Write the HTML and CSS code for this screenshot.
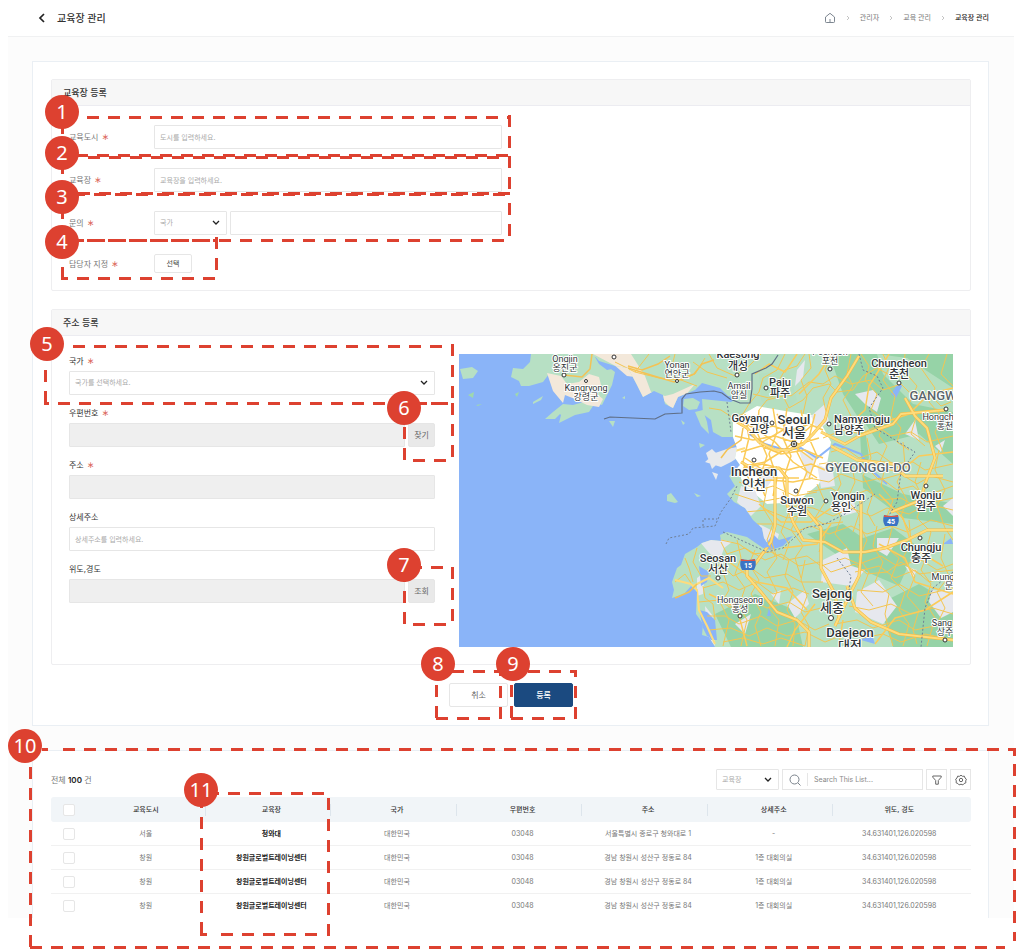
FILE: index.html
```html
<!DOCTYPE html>
<html lang="ko">
<head>
<meta charset="utf-8">
<title>교육장 관리</title>
<meta name="viewport" content="width=device-width, initial-scale=1">
<link rel="stylesheet" href="styles.css">
</head>
<body>
<div class="page">
  <header class="topbar">
    <button class="back" type="button" aria-label="뒤로">
      <svg width="8" height="10" viewBox="0 0 8 10"><path d="M6 1L2 5l4 4" fill="none" stroke="#222" stroke-width="1.700"/></svg>
    </button>
    <h1 class="title">교육장 관리</h1>
    <nav class="crumbs" aria-label="위치">
      <a href="#" aria-label="홈"><svg class="home" width="12" height="12" viewBox="0 0 12 12" fill="none" stroke="#7d8690" stroke-width="1"><path d="M1.500 5L6 1.300 10.500 5v4.700a.8.8 0 0 1-.8.8H2.300a.8.8 0 0 1-.8-.8z"/><path d="M6 10.500V7"/></svg></a>
      <svg class="sep" width="4" height="6" viewBox="0 0 4 6"><path d="M1 1l2 2-2 2" fill="none" stroke="#b5b5b5" stroke-width=".8"/></svg>
      <a href="#">관리자</a>
      <svg class="sep" width="4" height="6" viewBox="0 0 4 6"><path d="M1 1l2 2-2 2" fill="none" stroke="#b5b5b5" stroke-width=".8"/></svg>
      <a href="#">교육 관리</a>
      <svg class="sep" width="4" height="6" viewBox="0 0 4 6"><path d="M1 1l2 2-2 2" fill="none" stroke="#b5b5b5" stroke-width=".8"/></svg>
      <a href="#" class="current" aria-current="page">교육장 관리</a>
    </nav>
  </header>

  <main class="content">
    <form class="card">
      <section class="panel">
        <h2 class="panel-title">교육장 등록</h2>
        <div class="rows">
          <div class="row">
            <label for="city">교육도시 <span class="req">∗</span></label>
            <input class="field" id="city" type="text" placeholder="도시를 입력하세요.">
          </div>
          <div class="row">
            <label for="center">교육장 <span class="req">∗</span></label>
            <input class="field" id="center" type="text" placeholder="교육장을 입력하세요.">
          </div>
          <div class="row">
            <label for="dial">문의 <span class="req">∗</span></label>
            <div class="phone">
              <div class="select">
                <select class="field" id="dial"><option>국가</option></select>
                <svg class="arrow" width="8" height="6" viewBox="0 0 8 6"><path d="M1 1l3 3 3-3" fill="none" stroke="#222" stroke-width="1.300"/></svg>
              </div>
              <input class="field" type="tel" aria-label="문의 전화번호">
            </div>
          </div>
          <div class="row">
            <label for="manager">담당자 지정 <span class="req">∗</span></label>
            <button class="btn small" id="manager" type="button">선택</button>
          </div>
        </div>
      </section>

      <section class="panel">
        <h2 class="panel-title">주소 등록</h2>
        <div class="address">
          <div class="stack">
            <div class="item">
              <label for="country">국가 <span class="req">∗</span></label>
              <div class="select">
                <select class="field" id="country"><option>국가를 선택하세요.</option></select>
                <svg class="arrow" width="8" height="6" viewBox="0 0 8 6"><path d="M1 1l3 3 3-3" fill="none" stroke="#222" stroke-width="1.300"/></svg>
              </div>
            </div>
            <div class="item">
              <label for="zip">우편번호 <span class="req">∗</span></label>
              <div class="with-btn"><input class="field" id="zip" type="text" disabled><button class="btn gray" type="button">찾기</button></div>
            </div>
            <div class="item">
              <label for="addr">주소 <span class="req">∗</span></label>
              <input class="field" id="addr" type="text" disabled>
            </div>
            <div class="item">
              <label for="addr2">상세주소</label>
              <input class="field" id="addr2" type="text" placeholder="상세주소를 입력하세요.">
            </div>
            <div class="item">
              <label for="geo">위도,경도</label>
              <div class="with-btn"><input class="field" id="geo" type="text" disabled><button class="btn gray" type="button">조회</button></div>
            </div>
          </div>

          <svg class="map" viewBox="0 0 494 293" role="img" aria-label="지도">
            <defs>
              <clipPath id="land">
                <path d="M134 0L140 7 156 12 169 14 178 31 184 43 195 37 204 41 206 50 214 54 219 43 236 36 243 29 261 34 269 42 280 43 272 48 243 45 244 60 252 66 254 78 263 83 274 83 278 94 276 104 281 111 270 122 276 132 268 140 275 148 286 154 294 166 303 174 305 184 311 193 304 194 288 183 268 178 261 181 262 187 252 186 243 189 238 193 226 200 222 211 218 214 213 228 215 236 213 244 225 240 232 232 238 238 237 260 244 270 243 281 250 283 256 293H494V0z"/>
              </clipPath>
            </defs>
            <rect width="494" height="293" fill="#8ab4f8"/>
            <!-- islands and northern peninsulas -->
            <g fill="#b7e0c4">
              <path d="M72 0L71 8 64 15 54 14 52 23 60 27 62 32 70 32 84 28 90 20 100 30 104 41 112 36 120 44 143 51 153 31 156 18 148 12 136 0z"/>
              <path d="M1 15l12-2 6 4-5 7-10 1zM99 58l5-8 10 1 14-4 8 2-6 9-14 3-16 8 2-8zM86 65l8-7 10-8 4 3-8 8-4 4zM74 48l10-6-2 4-8 4z"/>
              <path d="M150 67h6l-2 6zM163 44l3-2v3zM240 89l6 2-5 3zM222 66l4 3-2 2z"/>
              <path d="M208 141l4-2 7 9-3 1-8-2zM235 139l7 3-4 1zM227 154l6 4zM206 169l3 2zM194 180l3 3zM225 45l9-1 7 4-3 7-8 1-6-4z"/>
              <path d="M236 58l8-2 4 12 2 12-8-8z"/>
              <path d="M56 40l4-2-2 5zM9 41l6-3-1 6zM17 51l6-1-4 2z" fill="#9fd8ad"/>
            </g>
            <path d="M88 19l14 3 6 8 12-2 10-8 10 3 2 8-8 6 10 8-4 8-12-2-12-6-10-4-2 8-10-12zM134 0l12 0 22 10 16 14-16-2-14-12-16-6z" fill="#f3e8da"/>
            <path d="M136 3l8 2 10 8 4 1-10 2-8-6z" fill="#8ab4f8"/>
            <path d="M246 108l10-9 12-4 10-2 2 10-8 5-10 5z M247 99l6-4 10 10-10 10zM253 118l6 2-2 6z" fill="#e8eaed"/>
            <g clip-path="url(#land)">
              <rect width="494" height="293" fill="#b7e0c4"/>
              <path d="M134 0H172L186 22 192 38 206 42 214 40 236 30 214 56 204 46 184 44 168 18z" fill="#f3e8da"/>
              <path d="M330 0h40l14 40 22 34 4 30-8 16 42 20 52 10V0zM348 180l36-10 20 14 30-10 24 18-18 40-46-20zM420 250l40-20 34 20v43h-60zM256 260l40-20 40 16 8 37h-72zM400 60l20 30 40-10 34 30v60l-50-6-40-30z" fill="#96d3a7"/>
              <path d="M300 20l30-4 8 30-20 20-16-20zM418 0l30 4 46 30v24l-40-8-30-30z" fill="#b4dfc0"/>
              <path d="M274 66l24-14 34 6 26 4 14 26-4 22-8 20-22 18-30 2-24-20-10-30z" fill="#fff"/>
              <g fill="#e6e8ee">
                <path d="M338 16l8-10-2 18-8 8zM396 40l18-4 8 8-4 14-12-8zM352 62l14-12 4 18-12 8zM446 80l10-14 4 20zM476 92l10-6-4 12zM358 110l16 8 2 14-14 2zM282 132l14 4 6 16-10 10-14-14zM300 170l20 10-4 14-12-8zM374 150l20-6 4 14-14 4z"/>
                <path d="M364 206l24-12 4 18 14 4-14 16-30-4zM418 184l22 0-12 18-10-6zM398 238l22-12 18 26-14 18-28-12zM472 236l22 2v20l-12 6-12-16zM328 250l18-14 4 14-14 14zM312 240l10-4-2 14zM446 212l12 4-4 8zM484 152l10-8v18z"/>
                <path d="M241 188l14-4 18 4-8 6-4 12-10-6zM238 224l8-6-2 22-6 2zM246 252l8 10 2 30-8-10zM276 270l16-10-6 20zM296 112l20 10-10 14zM340 96l18 8-10 20z"/>
              </g>
              <path d="M304 194l10-14 6 6 14-4-10 10-12 4zM240 256l8 2 8 8 2 20-8 0-6-12zM240 212l10 6-2 10-6 4zM308 262l2-8 2 8zM432 40l8-12 3 4-6 12zM484 190l8-6 2 6zM402 286l10-8 4 12z" fill="#8ab4f8"/>
              <path d="M290 80l16 10 20 6 16-2 16 10 18-14 26 10 8 14 18 16" fill="none" stroke="#8ab4f8" stroke-width="2"/>
              <g class="lanes">
                <path d="M156 8l20 10 24 6 22 2 14-6 10-16M176 18l14-18M210 24l6-24M222 26l16 6M234 8l14 10 20 6"/>
                <path d="M250 0l8 14 18 8 14-10 12-12M250 54l12 2 12 8 10-4 6-10 10-12 4-14 14-8 8-16"/>
                <path d="M294 40l16 4 12-6 10 4 18-14 14 2 12-8 16 8 20-4 12 10 18-6 10 10 18 0 12 12 10-4"/>
                <path d="M300 56l8-10 16-4 6 12 14-8 10-12 16-4 8 8 16-2 10-14 14-8 18 10 10-4"/>
                <path d="M318 30l8-14 12-4 8-12M350 0l2 14-10 12 6 16-4 18M372 0l-6 16 6 14-8 14 4 18-10 12M392 0l-4 20 6 12-10 14 8 16-16 8"/>
                <path d="M402 0l8 12-4 14 12 14-6 16 14 10-6 16 8 10-8 18M424 0l6 14-6 12 12 16-4 20 10 12-4 14 12 8M446 0l-2 16 14 16-8 18 8 10-6 20 14 12M470 0l-8 14 14 20-6 14 14 16-8 14 8 20M488 0l-6 20 12 12"/>
                <path d="M364 84l20-8 18 4 16-8 14 10 20-4 16 10 26-6M372 98l14-4 14 10 18-6 16 12 20-2 12 8 28-6M360 110l16-2 14 10 18-4 12 12 22-6 16 10 14-8 22 6"/>
                <path d="M350 124l20 4 12-8 22 8 18-4 16 12 16-4 12 10 28-10M348 138l24-4 16 10 20-8 14 10 20-2 14 8 38-8M334 152l20 2 20 8 18-8 20 8 16-8 22 6 18-10 26 6"/>
                <path d="M280 128l20 8 14-4 22 10 22-4M276 140l24 8 22-4 20 8M286 158l22-2 20 8 22-4 14 10 20-2M294 170l24 0 18 8 16-6 18 8 22-8 16 8 24-8 16 6 24-12 22 6"/>
                <path d="M308 134l-4 20 10 16-6 16 8 16M324 138l6 20-8 20 8 12-6 16M340 160l-8 16 12 16-8 12 6 20M358 130l8 18-10 16 10 18-6 16M376 110l6 20-8 16 8 18-6 16 14 16M392 108l4 20-8 18 12 14-6 18M408 84l4 20-8 18 10 18-6 18 8 14M426 112l-4 20 12 14-8 22M444 88l2 24-8 16 10 18-6 16 8 14M462 108l-6 20 8 16-6 20 14 14-4 16M480 96l-4 20 10 20-8 16 8 22 8 12"/>
                <path d="M262 186l18 4 14 10 18-2 16 8 20-4 14 10 24-8 14 6 22-8 16 10 24-6 16 10 16-6"/>
                <path d="M268 200l18-6 20 12 16-6 18 12 20-4 12 10 24-8 12 10 20-2 14-10 18 12 34-4"/>
                <path d="M248 216l14-6 12 12 18-8 14 10 22-4 14 8 22 0M244 234l20-6 16 8 18-8 16 12 20-6 16 6"/>
                <path d="M240 248l20-2 12 8 20-8 16 8 22-6 16 10 16-4M248 262l18 0 14 8 22-8 16 10 20-6 18 10 14-6"/>
                <path d="M250 276l22-2 18 8 18-8 20 8 18-4 20 10 20-8M264 288l20-4 20 6 18-6 24 8"/>
                <path d="M216 228l10-8 8 12M226 204l4 10 4 14M238 194l-4 14 8 14 10 0M244 232l2 12 8 6 2 16M262 188l8 16-6 14 6 18-8 14 8 16-6 26"/>
                <path d="M278 186l4 18-6 16 10 14-6 18 8 14-6 26M296 196l-6 14 10 16-8 14 10 18-6 14 6 20M312 186l6 18-10 14 10 20-8 16 10 12-4 26M330 206l-4 16 8 16-6 18 8 14-2 22M346 206l-4 20 6 16-6 16 8 14-4 20"/>
                <path d="M400 170l8 16-8 18 10 14-8 20 12 14M418 172l-4 20 10 16-8 20 14 12-4 20 8 32M434 170l-6 24 12 10-8 20 14 14-6 18 10 14-6 22M450 166l2 22-8 16 12 18-8 20 12 14-6 20 4 14M470 196l-8 20 10 14-6 18 10 16-8 28M486 180l-4 24 8 18-12 16 8 16-6 12"/>
                <path d="M396 218l24-6 16 12 20-8 14 12 24-8M398 236l26 2 16-8 20 12 34-8M390 252l20 4 22-6 20 10 22-6 20 6M376 270l22-4 16 8 26-8 16 10 38-8M404 284l20-4 18 8 24-8 28 6"/>
              </g>
              <g class="streets">
                <path d="M280 66l18 10 16-4 18 6 18-8 14 6M276 82l18 4 22-4 24 8 20-6M282 98l20-6 20 8 24-4 18 8M284 114l20-4 24 6 24-6 14 6M290 128l22-2 22 2 20-4M286 60l4 24-6 24 8 24M300 56l-2 22 10 24-8 24 6 16M314 54l4 24-8 22 8 24-4 18M328 54l-4 30 8 18-8 24 4 20M342 56l4 22-8 20 10 20-10 24M356 60l-6 24 8 18-8 22"/>
                <path d="M292 72l24 16 18 20 24 16M352 72l-24 22-22 14-20 4M300 90l24-14 22-2M286 104l30 20 24 0M318 60l20 34 16 12"/>
                <path d="M340 40l20-20 12-20M384 76l22-20 4-24 20-32M420 70l30-10 20-20 24-6M410 110l30 8 20-16 34-4M300 150l22 18 30 0 26-18M420 190l26 14 10 24 38 12M270 208l28 20 30 6 20 22M416 290l20-26 30-8 28-18M356 250l-20 26-8 17M250 240l28 14 10 38M296 20l14-10 16 8 12-18M420 140l24 24 10 30 30 18M372 170l-14 20-34 4M380 290l4-24"/>
              </g>
              <g class="highway-edge">
                <path d="M282 108l14 8 24-2 8 10 0 26 6 18 10 18 22 2 18 10 22 0 20-4 22-8 20-10 46 0"/>
                <path d="M278 68l10 6 12 14 16 8 14 0 14-6 10-10 12-14 6-22 16-22 12-20"/>
                <path d="M316 112l0 26 0 34-4 16-16 22-8 2 0 10 14 16 16 20 20 8 12 12 0 26"/>
                <path d="M372 92l26 14 36 4 12 12 38 0M362 78l24 12 14-8 34-12 8-10 44-4M446 44l10 18 12 12 8 30-10 26-4 16-30 12"/>
                <path d="M402 140l0 60-2 22-10 20-14 30M388 232l8 22 16 14 28 12 54 6M342 150l20 24 0 40 14 26 4 24"/>
              </g>
              <g class="highway">
                <path d="M282 108l14 8 24-2 8 10 0 26 6 18 10 18 22 2 18 10 22 0 20-4 22-8 20-10 46 0"/>
                <path d="M278 68l10 6 12 14 16 8 14 0 14-6 10-10 12-14 6-22 16-22 12-20"/>
                <path d="M316 112l0 26 0 34-4 16-16 22-8 2 0 10 14 16 16 20 20 8 12 12 0 26"/>
                <path d="M372 92l26 14 36 4 12 12 38 0M362 78l24 12 14-8 34-12 8-10 44-4M446 44l10 18 12 12 8 30-10 26-4 16-30 12"/>
                <path d="M402 140l0 60-2 22-10 20-14 30M388 232l8 22 16 14 28 12 54 6M342 150l20 24 0 40 14 26 4 24"/>
                <path d="M216 226l16 4 6 6 2 20 8 16 8 18M234 232l16-8 14 10M246 108l20-8 20-6"/>
              </g>
            </g>
            <g fill="none" stroke="#f4c254" stroke-width="1.500">
              <path d="M216 244l14-6 8-8M105 21l18 2 8-8 2-15M169 12l14 4 16-6 12-8M169 14l26 8 20 6 20-8 8-10 12-4"/>
              <path d="M262 104l6-8 14-10 2-12"/>
            </g>
            <path d="M145 65l6-2 45 2 10-5 17-1 0-14 4-5 14-2 14-1 8 2 8 6 10 4 10 0 2-14 0-15 14-6 6-4 6-9" fill="none" stroke="#5f6e86" stroke-width="1.200"/>
            <g fill="none" stroke="#6f7f96" stroke-width="1" stroke-dasharray="2 2">
              <path d="M207 190l3-6 20-4 4-6 22-2 6-14 10-14 6-12M244 172v-7h14M268 48l4 30M264 178l44 20 16-4 22-20 20-4 20-10 30-20M400 0l4 16 14 6 6 12-14 20 6 20 40 24-14 20-4 30-12 20M378 204l14 18-2 14M494 218l-20 16-8 20-4 39"/>
            </g>
            <g class="pins">
              <circle cx="105" cy="21" r="2"/><circle cx="127" cy="27" r="1.500"/><circle cx="155" cy="3" r="2"/><circle cx="218" cy="27" r="1.500"/><circle cx="278" cy="21" r="2"/><circle cx="307" cy="34" r="2"/><circle cx="371" cy="15" r="2"/><circle cx="440" cy="29" r="2"/><circle cx="313" cy="69" r="2"/><circle cx="370" cy="70" r="2"/><circle cx="487" cy="55" r="2"/><circle cx="295" cy="106" r="2"/><circle cx="337" cy="137" r="2"/><circle cx="367" cy="147" r="2"/><circle cx="467" cy="132" r="2"/><circle cx="461" cy="184" r="2"/><circle cx="259" cy="224" r="2"/><circle cx="281" cy="262" r="2"/><circle cx="372" cy="264" r="2.500"/><circle cx="486" cy="286" r="2"/>
              <circle cx="335" cy="90" r="2.800"/><circle cx="335" cy="90" r="1"/>
            </g>
            <g class="town">
              <text x="106" y="8">Ongjin</text><text x="106" y="17">옹진군</text>
              <text x="127" y="37">Kangryong</text><text x="127" y="46">강령군</text>
              <text x="218" y="14">Yonan</text><text x="218" y="23">연안군</text>
              <text x="280" y="35">Amsil</text><text x="280" y="44">암실</text>
              <text x="371" y="1">Pocheon</text><text x="371" y="10">포천</text>
              <text x="281" y="249">Hongseong</text><text x="281" y="258">홍성</text>
              <text x="479" y="66">Hongch</text><text x="486" y="75">홍천</text>
              <text x="484" y="226">Mung</text><text x="490" y="235">문</text>
              <text x="483" y="272">Sang</text><text x="486" y="281">상주</text>
            </g>
            <g class="city">
              <text x="279" y="4">Kaesong</text><text x="279" y="16">개성</text>
              <text x="321" y="32">Paju</text><text x="321" y="43">파주</text>
              <text x="440" y="13">Chuncheon</text><text x="440" y="24">춘천</text>
              <text x="291" y="68">Goyang</text><text x="300" y="79">고양</text>
              <text x="403" y="69">Namyangju</text><text x="390" y="80">남양주</text>
              <text x="338" y="150">Suwon</text><text x="338" y="161">수원</text>
              <text x="389" y="146">Yongin</text><text x="382" y="157">용인</text>
              <text x="467" y="145">Wonju</text><text x="467" y="156">원주</text>
              <text x="462" y="197">Chungju</text><text x="462" y="208">충주</text>
              <text x="259" y="208">Seosan</text><text x="259" y="219">서산</text>
            </g>
            <g class="metro">
              <text x="335" y="70">Seoul</text><text x="335" y="83">서울</text>
              <text x="295" y="122">Incheon</text><text x="295" y="135">인천</text>
              <text x="373" y="244">Sejong</text><text x="373" y="258">세종</text>
              <text x="391" y="283">Daejeon</text><text x="391" y="296">대전</text>
            </g>
            <g class="region"><text x="409" y="118">GYEONGGI-DO</text><text x="474" y="46">GANGW</text></g>
            <g class="shield">
              <path d="M425 161q7 2 14 0 2 6-1 11h-12q-3-5-1-11z"/><path class="cap" d="M425 161q7 2 14 0v2h-14z"/><text x="432" y="170">45</text>
              <path d="M282 205q7 2 14 0 2 6-1 11h-12q-3-5-1-11z"/><path class="cap" d="M282 205q7 2 14 0v2h-14z"/><text x="289" y="214">15</text>
            </g>
          </svg>
        </div>
      </section>

      <div class="actions">
        <button class="btn" type="button">취소</button>
        <button class="btn primary" type="submit">등록</button>
      </div>
    </form>

    <section class="card list">
      <div class="toolbar">
        <p class="count">전체 <b>100</b> 건</p>
        <div class="tools">
          <div class="select">
            <select class="field" aria-label="검색 항목"><option>교육장</option></select>
            <svg class="arrow" width="8" height="6" viewBox="0 0 8 6"><path d="M1 1l3 3 3-3" fill="none" stroke="#222" stroke-width="1.300"/></svg>
          </div>
          <div class="search">
            <svg width="12" height="12" viewBox="0 0 12 12" fill="none" stroke="#7b838c" stroke-width="1"><circle cx="5.500" cy="5.500" r="4.500"/><path d="M9 9l2.500 2.500"/></svg>
            <input type="text" aria-label="목록 검색" placeholder="Search This List...">
          </div>
          <button class="icon-btn" type="button" aria-label="필터"><svg width="10" height="10" viewBox="0 0 10 10" fill="none" stroke="#666" stroke-width="1" stroke-linejoin="round"><path d="M.8 1h8.400v1.200L6.300 5.500v3.700H3.700V5.500L.8 2.200z"/></svg></button>
          <button class="icon-btn" type="button" aria-label="설정"><svg width="12" height="12" viewBox="0 0 12 12" fill="none" stroke="#666" stroke-width="1" stroke-linejoin="round"><path d="M6 .8l1.500 1.100 1.900-.1.600 1.800 1.400 1.200-.7 1.700.2 1.900-1.800.7-1.200 1.400L6 9.800l-1.900.7-1.200-1.400-1.800-.7.2-1.900L.6 4.800 2 3.600l.6-1.800 1.900.1z" transform="translate(0 .4)"/><circle cx="6" cy="6" r="1.700"/></svg></button>
        </div>
      </div>
      <table class="grid">
        <colgroup><col class="c-check"><col class="c-city"><col class="c-mid"><col class="c-mid"><col class="c-mid"><col class="c-mid"><col class="c-mid"><col></colgroup>
        <thead>
          <tr><th><input type="checkbox" aria-label="전체 선택"></th><th class="line">교육도시</th><th class="line">교육장</th><th class="line">국가</th><th class="line">우편번호</th><th class="line">주소</th><th class="line">상세주소</th><th>위도, 경도</th></tr>
        </thead>
        <tbody>
          <tr><td><input type="checkbox" aria-label="선택"></td><td>서울</td><td class="name">청와대</td><td>대한민국</td><td>03048</td><td>서울특별시 종로구 청와대로 1</td><td>-</td><td>34.631401,126.020598</td></tr>
          <tr><td><input type="checkbox" aria-label="선택"></td><td>창원</td><td class="name">창원글로벌트레이닝센터</td><td>대한민국</td><td>03048</td><td>경남 창원시 성산구 정동로 84</td><td>1층 대회의실</td><td>34.631401,126.020598</td></tr>
          <tr><td><input type="checkbox" aria-label="선택"></td><td>창원</td><td class="name">창원글로벌트레이닝센터</td><td>대한민국</td><td>03048</td><td>경남 창원시 성산구 정동로 84</td><td>1층 대회의실</td><td>34.631401,126.020598</td></tr>
          <tr><td><input type="checkbox" aria-label="선택"></td><td>창원</td><td class="name">창원글로벌트레이닝센터</td><td>대한민국</td><td>03048</td><td>경남 창원시 성산구 정동로 84</td><td>1층 대회의실</td><td>34.631401,126.020598</td></tr>
        </tbody>
      </table>
    </section>
  </main>
</div>

<svg class="notes" width="1016" height="949" viewBox="0 0 1016 949">
  <g class="dashes">
    <!-- 1 -->
    <path d="M87 117.500H511M76 155.500H508M509.500 115V128M509.500 136V149M62.500 122V134"/>
    <!-- 2 -->
    <path d="M88 157.500H500M78 193.500H511M509.500 156V190M62.500 162V174"/>
    <!-- 3 -->
    <path d="M73 194.500H506M72 240.500H505M509.500 203V237M62.500 207V219"/>
    <!-- 4 -->
    <path d="M87 240.500H216M216.500 237V249M216.500 258V270M77 278.500H216M61 278.500H68M62.500 267V279"/>
    <!-- 5 -->
    <path d="M73 346.500H454M452.500 344V356M452.500 365V399M58 403.500H449M45.500 370V404M44 403.500H49"/>
    <!-- 6 -->
    <path d="M410 403.500H446M452.500 403V458M413 460.500H448M404.500 427V461"/>
    <!-- 7 -->
    <path d="M410 567.500H446M452.500 567V622M413 624.500H448M404.500 591V625M404.500 570V582"/>
    <!-- 8 -->
    <path d="M452 671.500H502M500.500 665V676M500.500 686V720M436 718.500H491M436.500 685V719"/>
    <!-- 9 -->
    <path d="M528 671.500H577M575.500 670V677M575.500 686V720M511 718.500H566M511.500 685V719"/>
    <!-- 10 -->
    <path d="M42 749.500H48M63 749.500H1016M1014.500 748V756M1014.500 764V941M30 947.500H1005M30.500 767V949"/>
    <!-- 11 -->
    <path d="M207 793.500H325M328.500 798V936M221 934.500H319M200 934.500H207M201.500 796V936"/>
  </g>
  <g class="dots">
    <circle cx="62" cy="112" r="17"/><circle cx="62" cy="153" r="17"/><circle cx="62" cy="197" r="17"/><circle cx="62" cy="242" r="17"/><circle cx="47" cy="344" r="17"/><circle cx="404" cy="408" r="17"/><circle cx="404" cy="565" r="17"/><circle cx="438" cy="664" r="17"/><circle cx="513" cy="664" r="17"/><circle cx="25" cy="746" r="17"/><circle cx="201" cy="790" r="17"/>
  </g>
  <g class="nums">
    <text x="62" y="119">1</text><text x="62" y="160">2</text><text x="62" y="204">3</text><text x="62" y="249">4</text><text x="47" y="351">5</text><text x="404" y="415">6</text><text x="404" y="572">7</text><text x="438" y="671">8</text><text x="513" y="671">9</text><text x="25" y="753">10</text><text x="201" y="797">11</text>
  </g>
</svg>
</body>
</html>
```
FILE: styles.css
```css
* { box-sizing: border-box; }

body {
  position: relative;
  margin: 0;
  min-height: 100vh;
  background: #fff;
  color: #333;
  font-family: Inter, "Noto Sans CJK KR", sans-serif;
  font-size: 7px;
  line-height: 14px;
}

h1, h2, p { margin: 0; }
svg { display: block; }
a { color: inherit; text-decoration: none; }
button, input, select { font: inherit; color: inherit; }

.page { padding: 0 2px 0 8px; }

/* header */
.topbar {
  display: flex;
  align-items: center;
  height: 37px;
  padding: 0 25px 0 30px;
  border-bottom: 1px solid #f0f1f2;
}
.back { padding: 0; border: 0; background: none; }
.title { margin-left: 11px; font-size: 10px; font-weight: 500; }
.crumbs {
  display: flex;
  align-items: center;
  gap: 10px;
  margin-left: auto;
  color: #777;
}
.crumbs .current { color: #222; font-weight: 500; }

/* cards and panels */
.content {
  display: flex;
  flex-direction: column;
  gap: 24px;
  padding: 24px 25px 0 24px;
  background: #fcfcfc;
}
.card {
  display: flex;
  flex-direction: column;
  gap: 18px;
  padding: 17px 17px 18px 18px;
  border: 1px solid #eaeff4;
  background: #fff;
}
.panel { border: 1px solid #eeeef0; border-radius: 2px; }
.panel-title {
  padding: 5px 11px;
  border-bottom: 1px solid #ececf1;
  background: #f7f7f7;
  font-size: 9px;
  font-weight: 500;
  line-height: 15px;
}

.rows {
  display: flex;
  flex-direction: column;
  gap: 19px;
  padding: 19px 17px 17px;
}
.row {
  display: grid;
  grid-template-columns: 85px 348px;
  align-items: center;
  justify-items: start;
  font-size: 8px;
  color: #777;
}
.row > .field, .phone { width: 100%; }
.phone { display: grid; grid-template-columns: 73px 1fr; gap: 3px; }
.req { margin-left: 1px; color: #dc6b60; font-family: "DejaVu Sans", sans-serif; font-size: 9px; line-height: 8px; }

.field {
  width: 100%;
  height: 24px;
  padding: 0 5px;
  border: 1px solid #e6e6e6;
  border-radius: 1px;
  background: #fff;
  color: #aaa;
  font-size: 7px;
}
.field:disabled { background: #efefef; border-color: #e6e6e6; }
::placeholder { color: #aaa; opacity: 1; }

.select { position: relative; }
.select .field { appearance: none; }
.arrow { position: absolute; right: 7px; top: 50%; margin-top: -3px; pointer-events: none; }

.btn {
  width: 59px;
  height: 24px;
  padding: 0;
  border: 1px solid #e6e6e6;
  border-radius: 2px;
  background: #fff;
  color: #666;
  font-size: 8px;
}
.btn.small { width: 38px; height: 19px; font-size: 7px; color: #444; }
.btn.gray { width: 27px; background: #e9e9e9; }
.btn.primary { background: #1b4a80; border-color: #1b4a80; color: #fff; font-weight: 500; }

.address {
  display: grid;
  grid-template-columns: 366fr 494fr;
  gap: 24px;
  padding: 18px 17px 17px;
}
.stack { display: flex; flex-direction: column; gap: 11px; }
.item { display: flex; flex-direction: column; gap: 3px; }
.item label { font-size: 8px; }
.with-btn { display: grid; grid-template-columns: 1fr 27px; gap: 3px; }

.actions { display: flex; justify-content: center; gap: 6px; }

/* map */
.map { width: 100%; height: auto; overflow: hidden; }
.map text {
  font-family: Roboto, "Noto Sans CJK KR", sans-serif;
  text-anchor: middle;
  fill: #2f3437;
  stroke: #fff;
  stroke-width: 2px;
  stroke-linejoin: round;
  paint-order: stroke;
}
.lanes, .streets, .highway, .highway-edge { fill: none; stroke-linejoin: round; }
.lanes { stroke: #f3c552; stroke-width: 1; }
.streets { stroke: #fbcb58; stroke-width: 1.5; }
.highway-edge { stroke: #f7b83e; stroke-width: 3; }
.highway { stroke: #fedc7c; stroke-width: 2; }
.pins { fill: #fff; stroke: #333; stroke-width: 1; }
.map .town text { font-size: 9px; }
.map .city text { font-size: 11px; font-weight: 500; }
.map .metro text { font-size: 13px; font-weight: 500; }
.map .region text { font-size: 13px; font-weight: 500; fill: #5a656b; }
.shield { fill: #3b73c4; }
.shield .cap { fill: #d8564a; }
.map .shield text { font-size: 7px; font-weight: 700; fill: #fff; stroke: none; }

/* list */
.list { gap: 7px; padding: 18px 17px 0 18px; border-bottom: 0; }
.toolbar { display: flex; align-items: center; justify-content: space-between; }
.count { font-size: 8px; color: #777; }
.count b { color: #222; font-weight: 600; }
.tools { display: flex; gap: 3px; }
.tools .select { width: 63px; }
.tools .field { height: 21px; }
.search {
  display: flex;
  align-items: center;
  gap: 6px;
  width: 141px;
  height: 21px;
  padding: 0 6px;
  border: 1px solid #e6e6e6;
}
.search svg { flex: none; }
.search input {
  width: 100%;
  height: 13px;
  padding: 0 0 0 6px;
  border: 0;
  border-left: 1px solid #e6e6e6;
  background: none;
}
.search ::placeholder { color: #888; }
.icon-btn {
  display: grid;
  place-items: center;
  width: 21px;
  height: 21px;
  padding: 0;
  border: 1px solid #e6e6e6;
  background: #fff;
}

.grid {
  width: 100%;
  table-layout: fixed;
  border-collapse: separate;
  border-spacing: 0;
  text-align: center;
}
.c-check { width: 35px; }
.c-city { width: 13%; }
.c-mid { width: 13.65%; }
.grid th, .grid td { padding: 0 0 0 6px; white-space: nowrap; }
.grid th:nth-child(-n+2), .grid td:nth-child(-n+2) { padding: 0; }
.grid th:last-child, .grid td:last-child { padding: 0 6px 0 0; }
.grid th { height: 25px; background: #f1f5f8; font-weight: 500; }
.grid th:first-child { border-radius: 3px 0 0 3px; }
.grid th:last-child { border-radius: 0 3px 3px 0; }
.grid .line {
  background-image: linear-gradient(#dde5ec, #dde5ec);
  background-repeat: no-repeat;
  background-position: right center;
  background-size: 1px 12px;
}
.grid td { height: 24px; border-bottom: 1px solid #f1f1f1; color: #777; }
.grid tr:last-child td { border-bottom: 0; }
.grid .name { color: #222; font-weight: 600; }
.grid input {
  display: block;
  appearance: none;
  width: 12px;
  height: 12px;
  margin: 0 auto;
  border: 1px solid #e6e6e6;
  border-radius: 2px;
  background: #fff;
}

/* numbered callouts laid over the screen */
.notes { position: absolute; left: 0; top: 0; pointer-events: none; }
.dashes { fill: none; stroke: #dd4130; stroke-width: 3; stroke-dasharray: 12 9; }
.dots { fill: #dd4130; }
.nums { fill: #fff; font-family: "Noto Sans", sans-serif; font-size: 20px; text-anchor: middle; }
```
